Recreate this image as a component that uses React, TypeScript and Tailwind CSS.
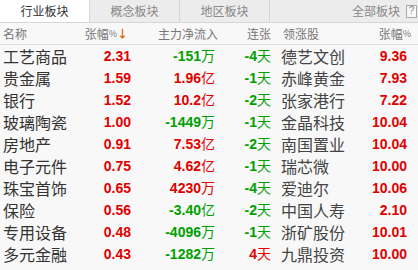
import React from "react";

type Row = {
    name: string;
    chg: string;
    flow: string;
    unit: string;
    streak: string;
    leader: string;
    leaderChg: string;
};

const rows: Row[] = [
    { name: "工艺商品", chg: "2.31", flow: "-151", unit: "万", streak: "-4", leader: "德艺文创", leaderChg: "9.36" },
    { name: "贵金属", chg: "1.59", flow: "1.96", unit: "亿", streak: "-1", leader: "赤峰黄金", leaderChg: "7.93" },
    { name: "银行", chg: "1.52", flow: "10.2", unit: "亿", streak: "-2", leader: "张家港行", leaderChg: "7.22" },
    { name: "玻璃陶瓷", chg: "1.00", flow: "-1449", unit: "万", streak: "-1", leader: "金晶科技", leaderChg: "10.04" },
    { name: "房地产", chg: "0.91", flow: "7.53", unit: "亿", streak: "-2", leader: "南国置业", leaderChg: "10.04" },
    { name: "电子元件", chg: "0.75", flow: "4.62", unit: "亿", streak: "-1", leader: "瑞芯微", leaderChg: "10.00" },
    { name: "珠宝首饰", chg: "0.65", flow: "4230", unit: "万", streak: "-4", leader: "爱迪尔", leaderChg: "10.06" },
    { name: "保险", chg: "0.56", flow: "-3.40", unit: "亿", streak: "-2", leader: "中国人寿", leaderChg: "2.10" },
    { name: "专用设备", chg: "0.48", flow: "-4096", unit: "万", streak: "-1", leader: "浙矿股份", leaderChg: "10.01" },
    { name: "多元金融", chg: "0.43", flow: "-1282", unit: "万", streak: "4", leader: "九鼎投资", leaderChg: "10.00" },
];

const tone = (v: string) => (v.startsWith("-") ? "text-[#00a000]" : "text-[#e00000]");

export default function App() {
    return (
        <div className="w-[418px] h-[270px] overflow-hidden bg-[#f8f8f8] font-['Liberation_Sans','Noto_Sans_CJK_SC',sans-serif] text-[#333]">
            {/* Tabs */}
            <div className="flex h-[23px] border-b border-[#d6d6d6] bg-[#ececec] text-[12px] font-['Noto_Sans_CJK_SC',sans-serif]">
                <div className="w-[90px] border-r border-[#d6d6d6] bg-white flex items-center justify-center text-[#333]">行业板块</div>
                <div className="w-[90px] border-r border-[#d6d6d6] flex items-center justify-center text-[#888]">概念板块</div>
                <div className="w-[90px] border-r border-[#d6d6d6] flex items-center justify-center text-[#888]">地区板块</div>
                <div className="flex-1 flex items-center justify-end pr-[1px] text-[#888]">
                    <span className="mr-[6px]">全部板块</span>
                    <span className="w-[11px] h-[13px] border border-[#a8a8a8] bg-[#f8f8f8] flex items-center justify-center text-[10px] leading-none text-[#888] font-['Liberation_Sans',sans-serif]">?</span>
                </div>
            </div>

            {/* Header */}
            <div className="flex items-center h-[22px] border-b border-[#dcdcdc] text-[12px] text-[#777] whitespace-nowrap font-['Noto_Sans_CJK_SC',sans-serif]">
                <div className="w-[88px] pl-[3px]">名称</div>
                <div className="w-[43px] pr-[3px] flex items-center justify-end">
                    <span>张幅</span>
                    <span className="text-[9px]">%</span>
                    <span className="text-[#e25c0a] text-[11px] font-bold">↓</span>
                </div>
                <div className="w-[87px] text-right">主力净流入</div>
                <div className="w-[53px] text-right">连张</div>
                <div className="w-[96px] pl-[12px]">领涨股</div>
                <div className="w-[44px] flex items-center justify-end">
                    <span>张幅</span>
                    <span className="text-[9px]">%</span>
                </div>
            </div>

            {/* Rows */}
            {rows.map(r => (
                <div key={r.name} className="flex items-center h-[22px] whitespace-nowrap">
                    <div className="w-[88px] pl-[3px] text-[16px] text-[#333] font-['Noto_Sans_CJK_SC',sans-serif]">{r.name}</div>
                    <div className="w-[43px] text-right text-[14px] font-bold text-[#e00000]">{r.chg}</div>
                    <div className={`w-[84px] text-right ${tone(r.flow)}`}>
                        <span className="text-[14px] font-bold">{r.flow}</span>
                        <span className="text-[14px] font-['Noto_Sans_CJK_SC',sans-serif]">{r.unit}</span>
                    </div>
                    <div className={`w-[56px] text-right ${tone(r.streak)}`}>
                        <span className="text-[14px] font-bold">{r.streak}</span>
                        <span className="text-[14px] font-['Noto_Sans_CJK_SC',sans-serif]">天</span>
                    </div>
                    <div className="w-[96px] pl-[10px] text-[16px] text-[#444] font-['Noto_Sans_CJK_SC',sans-serif]">{r.leader}</div>
                    <div className="w-[40px] text-right text-[14px] font-bold text-[#e00000]">{r.leaderChg}</div>
                </div>
            ))}
        </div>
    );
}
